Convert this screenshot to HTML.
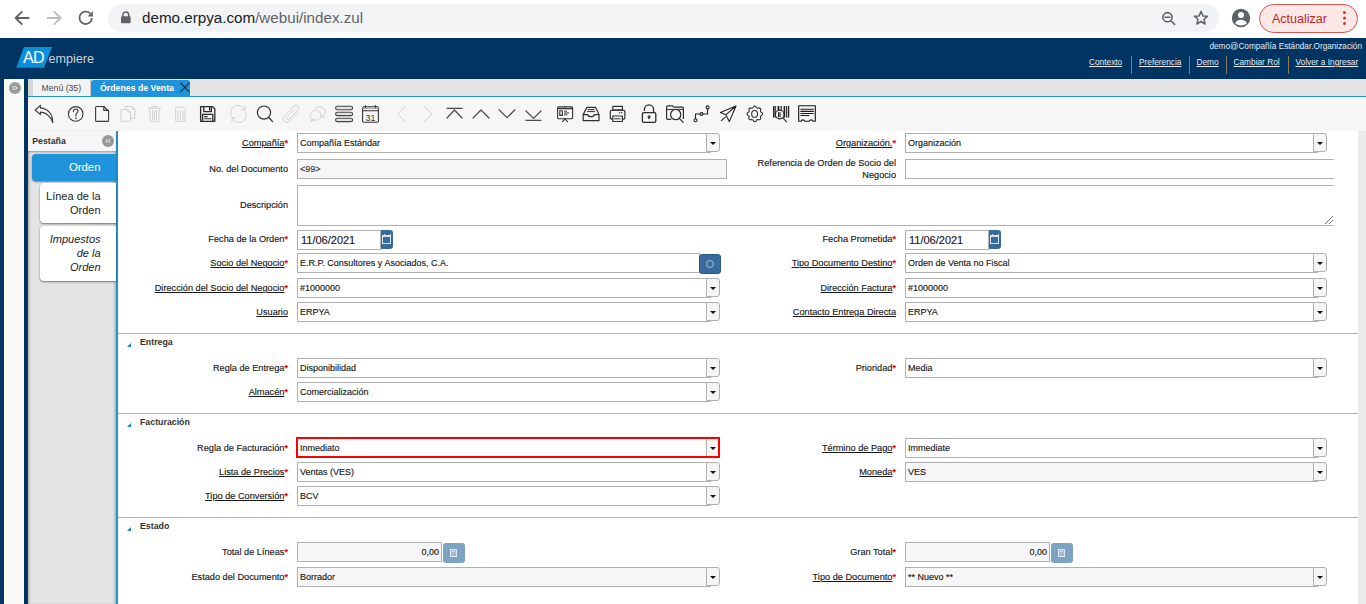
<!DOCTYPE html>
<html><head><meta charset="utf-8">
<style>
*{box-sizing:border-box;margin:0;padding:0}
html,body{width:1366px;height:604px;overflow:hidden}
body{position:relative;font-family:"Liberation Sans",sans-serif;background:#fff;color:#333}
.a{position:absolute}
.t{position:absolute;white-space:nowrap;line-height:1}
/* browser chrome */
#chrome{left:0;top:0;width:1366px;height:38px;background:#fff}
#pill{left:108px;top:4px;width:1111px;height:28px;border-radius:14px;background:#f1f3f4}
#url{left:142px;top:10px;font-size:15.2px;color:#202124}
#url span{color:#5f6368}
#upd{left:1259px;top:4px;width:99px;height:29px;border:1px solid #d9534f;border-radius:15px;background:#fce8e6}
#updt{left:1272px;top:12.5px;font-size:12.5px;color:#c5221f}
/* header */
#hdr{left:0;top:38px;width:1366px;height:41px;background:#003462}
#bgblue{left:0;top:79px;width:1366px;height:525px;background:#003462}
#lstrip{left:4px;top:79px;width:20px;height:525px;background:#f8f8f6;border-left:1px solid #fff}
#main{left:28px;top:79px;width:1338px;height:525px;background:#fff}
#tabbar{left:28px;top:79px;width:1338px;height:17px;background:#e4e4e4}
#tbline{left:28px;top:96px;width:1338px;height:1px;background:#1f94da}
#toolbar{left:28px;top:97px;width:1338px;height:34px;background:#f6f6f6}
#lpanel{left:28px;top:131px;width:88px;height:473px;background:#e4e4e4;box-shadow:inset 2px 3px 3px -1px rgba(0,0,0,.25), inset -2px 0 3px -1px rgba(0,0,0,.3)}
#vline{left:116px;top:131px;width:2px;height:473px;background:#1f94da}
#rstrip{left:1358px;top:131px;width:8px;height:473px;background:#ebebeb}
.lbl{position:absolute;white-space:nowrap;line-height:1;font-size:9.2px;color:#1a1a1a;text-align:right;-webkit-text-stroke:0.15px #1a1a1a}
.lbl u{text-decoration:underline;text-underline-offset:1px}
.req{color:#e8001c;font-weight:bold;-webkit-text-stroke:0.1px #e8001c}
.inp{position:absolute;height:20px;border:1px solid #b0b0b0;background:#fff;font-size:9px;color:#1a1a1a;-webkit-text-stroke:0.15px #1a1a1a;padding-left:2px;line-height:18px;white-space:nowrap}
.ro{background:#f6f6f6}
.cbtn{position:absolute;width:14px;height:19px;border:1px solid #b0b0b0;border-radius:0 3px 3px 0;background:#f5f5f5}
.cbtn:after{content:"";position:absolute;left:2.5px;top:8px;border-left:3px solid transparent;border-right:3px solid transparent;border-top:3px solid #111}
.sec{position:absolute;left:118px;width:1240px;height:1px;background:#b4b4b4}
.sect{position:absolute;left:140px;font-size:8.8px;font-weight:bold;color:#333;line-height:1}
.tri{position:absolute;left:126.5px;width:0;height:0;border-left:4.5px solid transparent;border-bottom:4.5px solid #1a78d0}
.dt{font-size:11px;padding-left:3px}
.calb{position:absolute;width:12px;height:19px;background:#386b9c;border-radius:0 3px 3px 0}
.calb i{position:absolute;left:1px;top:5px;width:9px;height:9px;border:1px solid #d5e3f0;border-top-width:2px}
.calb i:before{content:"";position:absolute;left:1px;top:-3px;width:5px;height:1px;border-left:1px solid #d5e3f0;border-right:1px solid #d5e3f0;height:3px}
.srch{position:absolute;width:22px;height:20px;background:#386b9c;border:1px solid #2a5a88;border-radius:3px}
.srch i{position:absolute;left:6px;top:5px;width:8px;height:8px;border:1px solid #a9c2da;border-radius:50%}
.calc{position:absolute;width:22px;height:20px;background:#7ea2c2;border-radius:3px}
.calc i{position:absolute;left:7px;top:6px;width:7px;height:8px;border:1px solid #dfe8f1;background:#a3bcd3}
.calc i:before{content:"";position:absolute;left:1px;top:1px;width:3px;height:1px;background:#dfe8f1}
.grip{position:absolute;left:1325px;top:216px;width:8px;height:8px;background:linear-gradient(135deg,transparent 45%,#777 45%,#777 55%,transparent 55%,transparent 70%,#777 70%,#777 80%,transparent 80%)}
.hl{position:absolute;top:58px;font-size:8.3px;color:#e8edf2;text-decoration:underline;white-space:nowrap;line-height:1}
.hs{position:absolute;top:56px;width:1px;height:18px;background:#8a7d5e}
</style></head><body>
<div id="chrome" class="a"></div>
<div id="pill" class="a"></div>
<div id="url" class="t">demo.erpya.com<span>/webui/index.zul</span></div>
<div id="upd" class="a"></div>
<div id="updt" class="t">Actualizar</div>

<div id="hdr" class="a"></div>
<div id="bgblue" class="a"></div>
<div id="lstrip" class="a"></div>
<div id="main" class="a"></div>
<div id="tabbar" class="a"></div>
<div id="tbline" class="a"></div>
<div id="toolbar" class="a"></div>
<div id="lpanel" class="a"></div>
<div id="vline" class="a"></div>
<div id="rstrip" class="a"></div>

<svg class="a" style="left:0;top:0" width="1366" height="38" viewBox="0 0 1366 38" fill="none" stroke-linecap="round" stroke-linejoin="round">
<g stroke="#5f6368" stroke-width="1.8"><path d="M28.6,18 H16 M21.8,11.8 L15.6,18 L21.8,24.2"/></g>
<g stroke="#babdc1" stroke-width="1.8"><path d="M47.6,18 H60.2 M54.4,11.8 L60.6,18 L54.4,24.2"/></g>
<g stroke="#5f6368" stroke-width="1.8"><path d="M91.8,18.6 A6.2,6.2 0 1 1 89.8,13.2"/></g>
<path d="M92.9,11 V16.4 H87.5 Z" fill="#5f6368"/>
<rect x="121" y="16.2" width="9.6" height="7" rx="0.8" fill="#5f6368"/>
<path d="M122.9,16.6 V14.8 A2.9,2.9 0 0 1 128.7,14.8 V16.6" stroke="#5f6368" stroke-width="1.5"/>
<g stroke="#5f6368" stroke-width="1.6"><circle cx="1167.5" cy="17.2" r="4.6"/><path d="M1171,20.8 L1174.6,24.4 M1165.2,17.2 H1169.8"/></g>
<path d="M1201,11.4 L1202.9,15.9 L1207.6,16.3 L1204,19.4 L1205.1,24 L1201,21.5 L1196.9,24 L1198,19.4 L1194.4,16.3 L1199.1,15.9 Z" stroke="#5f6368" stroke-width="1.5"/>
<circle cx="1241" cy="18" r="9.2" fill="#5f6368"/>
<circle cx="1241" cy="14.9" r="3" fill="#fff"/>
<path d="M1235.2,23.2 C1236.4,20.8 1238.8,19.8 1241,19.8 C1243.2,19.8 1245.6,20.8 1246.8,23.2 C1245.3,24.6 1243.3,25.4 1241,25.4 C1238.7,25.4 1236.7,24.6 1235.2,23.2 Z" fill="#fff"/>
<g fill="#d93025"><circle cx="1344.5" cy="12.5" r="1.5"/><circle cx="1344.5" cy="18" r="1.5"/><circle cx="1344.5" cy="23.5" r="1.5"/></g>
</svg>
<!-- header -->
<svg class="a" style="left:0;top:38px" width="120" height="41" viewBox="0 38 120 41">
<path d="M23.9,47 H52.1 L44,67.8 H16.2 Z" fill="#0b8fd9"/>
</svg>
<div class="t" style="left:23px;top:49.8px;font-size:16px;color:#fff;letter-spacing:-0.6px">AD</div>
<div class="t" style="left:48.5px;top:53px;font-size:12.6px;color:#c9d2db">empiere</div>
<div class="t" style="right:4px;top:42.5px;font-size:8.24px;color:#e6ebf0">demo@Compañía Estándar.Organización</div>
<div class="hl" style="left:1089px">Contexto</div>
<div class="hs" style="left:1131px"></div>
<div class="hl" style="left:1139px">Preferencia</div>
<div class="hs" style="left:1189px"></div>
<div class="hl" style="left:1196.5px">Demo</div>
<div class="hs" style="left:1226px"></div>
<div class="hl" style="left:1233.5px">Cambiar Rol</div>
<div class="hs" style="left:1288px"></div>
<div class="hl" style="left:1295.5px">Volver a Ingresar</div>
<!-- left strip button -->
<div class="a" style="left:9px;top:82px;width:12px;height:12px;border-radius:50%;background:#9c9c9c"></div>
<svg class="a" style="left:9px;top:82px" width="12" height="12" viewBox="0 0 12 12"><path d="M3.6,4 L5.4,6 L3.6,8 M6.2,4 L8,6 L6.2,8" stroke="#eee" stroke-width="1" fill="none"/></svg>
<!-- tabs -->
<div class="a" style="left:28px;top:79px;width:5px;height:17px;background:#d6d6d6"></div>
<div class="a" style="left:33px;top:79px;width:57px;height:17px;background:#f3f3f3"></div>
<div class="a" style="left:90px;top:79px;width:1px;height:17px;background:#c8c8c8"></div>
<div class="t" style="left:41.5px;top:83.5px;font-size:8.7px;color:#4a4a4a">Menú (35)</div>
<div class="a" style="left:91px;top:80px;width:99px;height:17px;background:#1f94da;border-radius:3px 3px 0 0"></div>
<div class="t" style="left:100px;top:83.5px;font-size:8.76px;color:#fff;font-weight:bold">Órdenes de Venta</div>
<svg class="a" style="left:178px;top:80px" width="14" height="16" viewBox="178 80 14 16"><path d="M180.3,82.6 L189.6,92.2 M189.6,82.6 L180.3,92.2" stroke="#16324f" stroke-width="1.2"/></svg>
<!-- left panel -->
<div class="a" style="left:28px;top:131px;width:88px;height:20px;background:#f6f6f6;box-shadow:0 1px 2px rgba(0,0,0,.35)"></div>
<div class="t" style="left:32.3px;top:136.5px;font-size:8.73px;color:#333;font-weight:bold">Pestaña</div>
<div class="a" style="left:102px;top:135px;width:12px;height:12px;border-radius:50%;background:#999"></div>
<svg class="a" style="left:102px;top:135px" width="12" height="12" viewBox="0 0 12 12"><path d="M5.6,4 L3.8,6 L5.6,8 M8.2,4 L6.4,6 L8.2,8" stroke="#eee" stroke-width="1" fill="none"/></svg>
<div class="a" style="left:32px;top:154px;width:84px;height:27px;background:#1f94da;border-radius:4px 0 0 4px;box-shadow:0 1px 2px rgba(0,0,0,.45)"></div>
<div class="t" style="right:1265.5px;top:162px;font-size:11.37px;color:#fff">Orden</div>
<div class="a" style="left:40px;top:183px;width:76px;height:40px;background:#fff;border-radius:4px 0 0 4px;box-shadow:0 1px 2px rgba(0,0,0,.5)"></div>
<div class="a" style="left:40px;top:226px;width:76px;height:55px;background:#fff;border-radius:4px 0 0 4px;box-shadow:0 1px 2px rgba(0,0,0,.5)"></div>
<div class="t" style="right:1265.5px;top:189px;font-size:11px;color:#222;text-align:right;line-height:14px;white-space:normal;width:70px">Línea de la<br>Orden</div>
<div class="t" style="right:1265.5px;top:232px;font-size:11px;color:#222;text-align:right;line-height:14px;white-space:normal;width:70px;font-style:italic">Impuestos<br>de la<br>Orden</div>
<svg class="a" style="left:0;top:97px" width="840" height="34" viewBox="0 97 840 34" fill="none" stroke-linecap="round" stroke-linejoin="round">
<g stroke="#3a3a3a" stroke-width="1.1">
<path d="M35.2,110 L40.4,105.4 L40.4,107.9 C47.5,108.6 52.8,113.5 52.8,122.6 C50.6,116.6 46.2,112.4 40.4,112.1 L40.4,114.6 Z"/>
<circle cx="75.7" cy="113.9" r="7.3"/>
<path d="M73.4,111.6 C73.4,109.9 74.5,109 75.8,109 C77.2,109 78,110 78,111.1 C78,112.8 75.9,113.2 75.9,115.2 L75.9,116.2"/>
<path d="M75.9,118.3 L75.9,118.6" stroke-width="1.4"/>
<path d="M96.6,106.5 H104 L108.6,111.2 V120.4 A1,1 0 0 1 107.6,121.4 H96.6 A1,1 0 0 1 95.6,120.4 V107.5 A1,1 0 0 1 96.6,106.5 Z M103.8,106.6 V110.4 H108.5"/>
</g>
<g stroke="#d2d2d2" stroke-width="1">
<path d="M121.5,109.5 H128 L130.5,112 V121.3 H121.5 Z M128,109.5 V112 H130.5"/>
<path d="M125.5,109.4 V106.5 H132.2 L134.8,109 V118.3 H130.6 M132.2,106.5 V109 H134.8"/>
<path d="M148.2,108.2 H160.8 M151.8,108 V106.5 H157.2 V108 M149.5,108.5 L150.5,121.3 H158.5 L159.5,108.5 M152.5,110.5 V119.5 M154.5,110.5 V119.5 M156.5,110.5 V119.5"/>
<path d="M175.5,109 C175.5,107 180.5,106.3 180.5,107.5 C180.5,106.3 185.5,107 185.5,109 L184.8,121.3 H176.2 Z M178,111 V119.5 M180.5,111 V119.5 M183,111 V119.5"/>
</g>
<g stroke="#2a2a2a" stroke-width="1.3">
<path d="M200.6,106.6 H212.6 L214.8,108.8 V121.3 H200.6 Z"/>
<path d="M203.8,106.8 V111.6 H211.4 V106.8 M209.6,107.6 V110"/>
<path d="M202.6,121 V114.4 H212.8 V121"/>
<path d="M204.6,116.6 H207.2 M204.6,118.8 H211" stroke-width="1.1"/>
</g>
<g stroke="#d2d2d2" stroke-width="1">
<path d="M231.3,115.5 A7.2,7.2 0 0 1 244.6,109.5 M245.6,112.2 A7.2,7.2 0 0 1 232.4,118.3"/>
<path d="M245.2,106.3 V110 H241.6 M231.9,121.4 V117.7 H235.5"/>
<path d="M298.2,112.4 L289.5,121.2 C288,122.6 285.6,122.6 284.2,121.2 C282.8,119.8 282.8,117.4 284.2,116 L294,106.2 C295.1,105.1 296.8,105.1 297.9,106.2 C299,107.3 299,109 297.9,110.1 L289,119 C288.4,119.6 287.5,119.6 286.9,119 C286.3,118.4 286.3,117.5 286.9,116.9 L293.8,110"/>
<ellipse cx="315.6" cy="115.3" rx="5.5" ry="4.8"/><path d="M312.3,119.2 L310.9,121.4 L314,120.1 M314.8,108.9 C315.8,107.7 317.6,107 319.8,107 C322.9,107 325.4,109.2 325.4,112 C325.4,113.8 324.5,115.1 323.3,116 L324,117.8 L321.4,116.8"/>
</g>
<g stroke="#333" stroke-width="1.2">
<circle cx="264" cy="112.6" r="6.6"/>
<path d="M268.8,117.5 L272.6,121.6" stroke-width="1.3"/>
</g>
<g stroke="#444" stroke-width="1.1" fill="#e2e2e2">
<rect x="335.6" y="106.3" width="17" height="3.4" rx="1.7"/>
<rect x="335.6" y="112.2" width="17" height="3.4" rx="1.7"/>
<rect x="335.6" y="118.2" width="17" height="3.4" rx="1.7"/>
</g>
<g stroke="#333" stroke-width="1.1">
<rect x="362.6" y="106.8" width="15.8" height="15.4" rx="1.2"/>
<path d="M362.6,110.7 H378.4 M365.5,105.5 V108 M375.5,105.5 V108"/>
<path d="M362.6,108.2 H378.4" stroke="#999"/>
</g>
<text x="370.5" y="121" font-family="Liberation Sans" font-size="8.8" fill="#333" text-anchor="middle">31</text>
<g stroke="#d0d0d0" stroke-width="1">
<path d="M405.2,106.2 L397.8,114 L405.2,121.8 M423.9,106.2 L431.9,114 L423.9,121.8"/>
</g>
<g stroke="#4a4a4a" stroke-width="1.2">
<path d="M447,108.4 H462 M447,118 L454.5,110 L462,118"/>
<path d="M473,118 L481,110 L489,118"/>
<path d="M499,109.8 L507,117.6 L515,109.8"/>
<path d="M526,111 L533.5,118.4 L541,111 M526,120.3 H541"/>
</g>
<g stroke="#333" stroke-width="1.1">
<rect x="557.6" y="106.9" width="15" height="11.8" rx="1"/>
<path d="M557.6,108.6 H572.6 M565,106.2 V107 M565,118.8 L562.5,121.6 M565,118.8 L567.5,121.6"/>
<rect x="559.8" y="110.8" width="2.6" height="4.6"/>
<path d="M564.5,111.2 H566.5 M564.5,113 H568.6 M564.5,114.8 H566.8" stroke-width="1"/>
</g>
<g stroke="#2e2e2e" stroke-width="1.2">
<path d="M587,107.3 H595.5 L599,114.6 V120.7 H583.2 V114.6 Z M583.2,114.6 H587.8 C588.2,117.4 593.8,117.4 594.2,114.6 H599"/>
<path d="M588,109.6 H594.2 M587.6,111.6 H594.6" stroke-width="1"/>
</g>
<g stroke="#333" stroke-width="1.2">
<rect x="612.8" y="106.3" width="9.6" height="3.9"/>
<rect x="610.3" y="110.2" width="14.6" height="9" rx="2"/>
<rect x="612.8" y="116" width="9.6" height="5.5" fill="#f6f6f6"/>
<path d="M614.5,118.8 H620" stroke-width="1"/>
<path d="M619.6,112.6 V112.8 M621.8,112.6 V112.8" stroke-width="1.4"/>
</g>
<g stroke="#2a2a2a" stroke-width="1.3">
<path d="M644.4,110.4 V109.4 A4.6,4.6 0 0 1 653.6,109.4 V112.2"/>
<rect x="642.4" y="112.6" width="13.4" height="9.8" rx="1.4"/>
<circle cx="649.1" cy="116.8" r="1" stroke-width="1.1"/>
<path d="M649.1,117.8 V118.8" stroke-width="1.1"/>
</g>
<g stroke="#2e2e2e" stroke-width="1.2">
<path d="M670.8,119.4 H668 A1.4,1.4 0 0 1 666.6,118 V107.2 A1.4,1.4 0 0 1 668,105.8 H672.3 L673.8,107.1 H682.2 A1.2,1.2 0 0 1 683.4,108.3 V118.4"/>
<path d="M666.6,109.4 H683.4" stroke-width="1"/>
<circle cx="675.7" cy="114.6" r="5.1"/>
<path d="M679.3,118.3 L683.2,122.3"/>
</g>
<g stroke="#222" stroke-width="1.1">
<path d="M695.5,118.6 V114 H700.1 M702.9,114 H707.6 V109"/>
<circle cx="695.5" cy="120.2" r="1.5"/>
<circle cx="701.5" cy="114" r="1.4"/>
<circle cx="707.6" cy="107.4" r="1.5"/>
</g>
<g stroke="#222" stroke-width="1.1">
<path d="M736,106 L720.4,112.6 L725.8,114.8 L729.3,121.6 Z M736,106 L725.8,114.8 M725.3,117.2 L721.3,120.6"/>
</g>
<g stroke="#2a2a2a" stroke-width="1.1">
<path d="M754.80,106.15 L755.30,106.27 L755.76,106.59 L756.17,107.03 L756.51,107.50 L756.84,107.89 L757.19,108.13 L757.61,108.20 L758.11,108.16 L758.69,108.08 L759.29,108.05 L759.84,108.15 L760.28,108.42 L760.55,108.86 L760.65,109.41 L760.62,110.01 L760.54,110.59 L760.50,111.09 L760.57,111.51 L760.81,111.86 L761.20,112.19 L761.67,112.53 L762.11,112.94 L762.43,113.40 L762.55,113.90 L762.43,114.40 L762.11,114.86 L761.67,115.27 L761.20,115.61 L760.81,115.94 L760.57,116.29 L760.50,116.71 L760.54,117.21 L760.62,117.79 L760.65,118.39 L760.55,118.94 L760.28,119.38 L759.84,119.65 L759.29,119.75 L758.69,119.72 L758.11,119.64 L757.61,119.60 L757.19,119.67 L756.84,119.91 L756.51,120.30 L756.17,120.77 L755.76,121.21 L755.30,121.53 L754.80,121.65 L754.30,121.53 L753.84,121.21 L753.43,120.77 L753.09,120.30 L752.76,119.91 L752.41,119.67 L751.99,119.60 L751.49,119.64 L750.91,119.72 L750.31,119.75 L749.76,119.65 L749.32,119.38 L749.05,118.94 L748.95,118.39 L748.98,117.79 L749.06,117.21 L749.10,116.71 L749.03,116.29 L748.79,115.94 L748.40,115.61 L747.93,115.27 L747.49,114.86 L747.17,114.40 L747.05,113.90 L747.17,113.40 L747.49,112.94 L747.93,112.53 L748.40,112.19 L748.79,111.86 L749.03,111.51 L749.10,111.09 L749.06,110.59 L748.98,110.01 L748.95,109.41 L749.05,108.86 L749.32,108.42 L749.76,108.15 L750.31,108.05 L750.91,108.08 L751.49,108.16 L751.99,108.20 L752.41,108.13 L752.76,107.89 L753.09,107.50 L753.43,107.03 L753.84,106.59 L754.30,106.27 Z"/>
<ellipse cx="754.6" cy="113.9" rx="2.9" ry="3.4"/>
</g>
<g fill="#222" stroke="none">
<rect x="773" y="106" width="1.6" height="11.6"/>
<rect x="775.2" y="106" width="0.9" height="11.6"/>
<rect x="777.6" y="106" width="1.8" height="5"/>
<rect x="780.6" y="106" width="1.2" height="5"/>
<rect x="783.6" y="106" width="1.6" height="11.6"/>
<rect x="786" y="106" width="0.9" height="11.6"/>
<rect x="787.8" y="106" width="1.4" height="11.6"/>
</g>
<g stroke="#222" stroke-width="1.1">
<circle cx="779.7" cy="114.6" r="4.3" fill="#f6f6f6"/>
<rect x="778" y="112.2" width="1.6" height="5" fill="#222" stroke="none"/>
<rect x="780" y="112.2" width="1.2" height="5" fill="#888" stroke="none"/>
<path d="M782.8,117.8 L786.6,121.8"/>
</g>
<g stroke="#1a1a1a" stroke-width="1.15">
<path d="M798.7,105.7 H815.3 V121.2 H813 A2,2 0 0 0 809.2,121.2 H804.8 A2,2 0 0 0 801,121.2 H798.7 Z"/>
<path d="M800.8,109.3 H813.3 M800.8,111.4 H813.3 M800.8,113.5 H813.3 M800.8,115.5 H809" stroke-width="1.1"/>
</g>
</svg>

<div class="lbl" style="right:1078px;top:133px;height:20px;line-height:20px"><u>Compañía</u><span class="req">*</span></div>
<div class="inp" style="left:297px;top:133px;width:414px">Compañía Estándar</div>
<div class="cbtn" style="left:706px;top:133px"></div>
<div class="lbl" style="right:470px;top:133px;height:20px;line-height:20px"><u>Organización.</u><span class="req">*</span></div>
<div class="inp" style="left:905px;top:133px;width:413px">Organización</div>
<div class="cbtn" style="left:1313px;top:133px"></div>
<div class="lbl" style="right:1078px;top:159px;height:20px;line-height:20px">No. del Documento</div>
<div class="inp ro" style="left:297px;top:159px;width:430px;height:20px;color:#444">&lt;99&gt;</div>
<div class="lbl" style="right:470px;top:157px;line-height:12px;white-space:normal;width:150px">Referencia de Orden de Socio del Negocio</div>
<div class="inp" style="left:905px;top:159px;width:429px;height:20px;border-right:none"></div>
<div class="lbl" style="right:1078px;top:185px;height:41px;line-height:41px">Descripción</div>
<div class="inp" style="left:297px;top:185px;width:1037px;height:41px;border-right:none"></div>
<div class="grip"></div>
<div class="lbl" style="right:1078px;top:229px;height:20px;line-height:20px">Fecha de la Orden<span class="req">*</span></div>
<div class="inp dt" style="left:297px;top:230px;width:84px">11/06/2021</div>
<div class="calb" style="left:381px;top:230px"><i></i></div>
<div class="lbl" style="right:470px;top:229px;height:20px;line-height:20px">Fecha Prometida<span class="req">*</span></div>
<div class="inp dt" style="left:905px;top:230px;width:84px">11/06/2021</div>
<div class="calb" style="left:989px;top:230px"><i></i></div>
<div class="lbl" style="right:1078px;top:253px;height:20px;line-height:20px"><u>Socio del Negocio</u><span class="req">*</span></div>
<div class="inp" style="left:297px;top:253px;width:403px;height:20px;">E.R.P. Consultores y Asociados, C.A.</div>
<div class="srch" style="left:699px;top:254px"><i></i></div>
<div class="lbl" style="right:470px;top:253px;height:20px;line-height:20px"><u>Tipo Documento Destino</u><span class="req">*</span></div>
<div class="inp" style="left:905px;top:253px;width:413px">Orden de Venta no Fiscal</div>
<div class="cbtn" style="left:1313px;top:253px"></div>
<div class="lbl" style="right:1078px;top:278px;height:20px;line-height:20px"><u>Dirección del Socio del Negocio</u><span class="req">*</span></div>
<div class="inp" style="left:297px;top:278px;width:414px">#1000000</div>
<div class="cbtn" style="left:706px;top:278px"></div>
<div class="lbl" style="right:470px;top:278px;height:20px;line-height:20px"><u>Dirección Factura</u><span class="req">*</span></div>
<div class="inp" style="left:905px;top:278px;width:413px">#1000000</div>
<div class="cbtn" style="left:1313px;top:278px"></div>
<div class="lbl" style="right:1078px;top:302px;height:20px;line-height:20px"><u>Usuario</u></div>
<div class="inp" style="left:297px;top:302px;width:414px">ERPYA</div>
<div class="cbtn" style="left:706px;top:302px"></div>
<div class="lbl" style="right:470px;top:302px;height:20px;line-height:20px"><u>Contacto Entrega Directa</u></div>
<div class="inp" style="left:905px;top:302px;width:413px">ERPYA</div>
<div class="cbtn" style="left:1313px;top:302px"></div>
<div class="sec" style="top:333px"></div><div class="tri" style="top:343px"></div><div class="sect" style="top:338px">Entrega</div>
<div class="lbl" style="right:1078px;top:358px;height:20px;line-height:20px">Regla de Entrega<span class="req">*</span></div>
<div class="inp" style="left:297px;top:358px;width:414px">Disponibilidad</div>
<div class="cbtn" style="left:706px;top:358px"></div>
<div class="lbl" style="right:470px;top:358px;height:20px;line-height:20px">Prioridad<span class="req">*</span></div>
<div class="inp" style="left:905px;top:358px;width:413px">Media</div>
<div class="cbtn" style="left:1313px;top:358px"></div>
<div class="lbl" style="right:1078px;top:382px;height:20px;line-height:20px"><u>Almacén</u><span class="req">*</span></div>
<div class="inp" style="left:297px;top:382px;width:414px">Comercialización</div>
<div class="cbtn" style="left:706px;top:382px"></div>
<div class="sec" style="top:413px"></div><div class="tri" style="top:423px"></div><div class="sect" style="top:418px">Facturación</div>
<div class="lbl" style="right:1078px;top:438px;height:20px;line-height:20px">Regla de Facturación<span class="req">*</span></div>
<div class="inp" style="left:296px;top:437px;width:424px;height:21px;border:2px solid #f00;line-height:18px;padding-left:2px">Inmediato</div>
<div class="cbtn" style="left:706px;top:439px;width:12px;height:17px;border-right:none;border-top:none;border-bottom:none;border-radius:0"></div>
<div class="lbl" style="right:470px;top:438px;height:20px;line-height:20px"><u>Término de Pago</u><span class="req">*</span></div>
<div class="inp" style="left:905px;top:438px;width:413px">Immediate</div>
<div class="cbtn" style="left:1313px;top:438px"></div>
<div class="lbl" style="right:1078px;top:462px;height:20px;line-height:20px"><u>Lista de Precios</u><span class="req">*</span></div>
<div class="inp" style="left:297px;top:462px;width:414px">Ventas (VES)</div>
<div class="cbtn" style="left:706px;top:462px"></div>
<div class="lbl" style="right:470px;top:462px;height:20px;line-height:20px"><u>Moneda</u><span class="req">*</span></div>
<div class="inp ro" style="left:905px;top:462px;width:413px">VES</div>
<div class="cbtn" style="left:1313px;top:462px"></div>
<div class="lbl" style="right:1078px;top:486px;height:20px;line-height:20px"><u>Tipo de Conversión</u><span class="req">*</span></div>
<div class="inp" style="left:297px;top:486px;width:414px">BCV</div>
<div class="cbtn" style="left:706px;top:486px"></div>
<div class="sec" style="top:517px"></div><div class="tri" style="top:527px"></div><div class="sect" style="top:522px">Estado</div>
<div class="lbl" style="right:1078px;top:542px;height:20px;line-height:20px">Total de Líneas<span class="req">*</span></div>
<div class="inp ro" style="left:297px;top:542px;width:145px;height:20px;text-align:right;padding-right:2px">0,00</div>
<div class="calc" style="left:443px;top:543px"><i></i></div>
<div class="lbl" style="right:470px;top:542px;height:20px;line-height:20px">Gran Total<span class="req">*</span></div>
<div class="inp ro" style="left:905px;top:542px;width:145px;height:20px;text-align:right;padding-right:2px">0,00</div>
<div class="calc" style="left:1051px;top:543px"><i></i></div>
<div class="lbl" style="right:1078px;top:567px;height:20px;line-height:20px">Estado del Documento<span class="req">*</span></div>
<div class="inp ro" style="left:297px;top:567px;width:414px">Borrador</div>
<div class="cbtn" style="left:706px;top:567px"></div>
<div class="lbl" style="right:470px;top:567px;height:20px;line-height:20px"><u>Tipo de Documento</u><span class="req">*</span></div>
<div class="inp ro" style="left:905px;top:567px;width:413px">** Nuevo **</div>
<div class="cbtn" style="left:1313px;top:567px"></div>
</body></html>
